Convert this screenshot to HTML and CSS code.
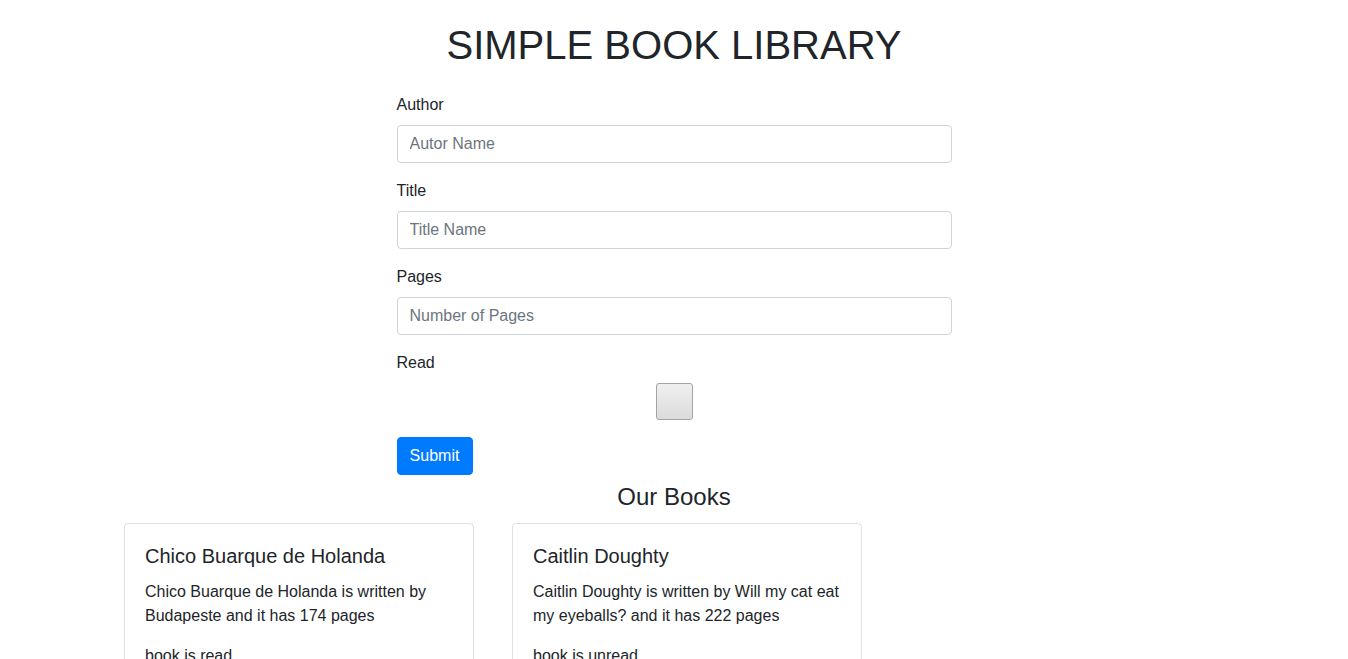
FILE: index.html
```html
<!DOCTYPE html>
<html>
<head>
<meta charset="utf-8">
<link rel="stylesheet" href="styles.css">
</head>
<body>
<h1 class="page-title">SIMPLE BOOK LIBRARY</h1>
<form class="book-form">
  <div class="form-group">
    <label class="form-label">Author</label>
    <input class="form-control" type="text" placeholder="Autor Name">
  </div>
  <div class="form-group">
    <label class="form-label">Title</label>
    <input class="form-control" type="text" placeholder="Title Name">
  </div>
  <div class="form-group">
    <label class="form-label">Pages</label>
    <input class="form-control" type="text" placeholder="Number of Pages">
  </div>
  <div class="form-group">
    <label class="form-label">Read</label>
    <div class="check-row"><input class="check" type="checkbox"></div>
  </div>
  <button class="btn-submit" type="button">Submit</button>
</form>
<h4 class="section-title">Our Books</h4>
<div class="cards">
  <div class="card">
    <h5 class="card-title">Chico Buarque de Holanda</h5>
    <p class="card-text">Chico Buarque de Holanda is written by Budapeste and it has 174 pages</p>
    <p class="card-text">book is read</p>
  </div>
  <div class="card">
    <h5 class="card-title">Caitlin Doughty</h5>
    <p class="card-text">Caitlin Doughty is written by Will my cat eat my eyeballs? and it has 222 pages</p>
    <p class="card-text">book is unread</p>
  </div>
</div>
</body>
</html>
```
FILE: styles.css
```css
* { box-sizing: border-box; }
body {
  margin: 0;
  font-family: "Liberation Sans", Arial, sans-serif;
  font-size: 16px;
  line-height: 1.5;
  color: #212529;
  background: #fff;
}
.page-title {
  margin: 21px 0 24px;
  font-size: 40px;
  font-weight: 400;
  line-height: 1.2;
  text-align: center;
}
.book-form {
  width: 555px;
  margin: 0 auto;
}
.form-group { margin-bottom: 16px; }
.form-label {
  display: block;
  margin-bottom: 8px;
}
.form-control {
  display: block;
  width: 100%;
  height: 38px;
  padding: 6px 12px;
  font-family: inherit;
  font-size: 16px;
  line-height: 1.5;
  color: #495057;
  background: #fff;
  border: 1px solid #ced4da;
  border-radius: 4px;
}
.form-control::placeholder { color: #6c757d; opacity: 1; }
.check-row {
  display: flex;
  justify-content: center;
  align-items: flex-start;
  height: 38px;
}
.check {
  appearance: none;
  -webkit-appearance: none;
  margin: 0;
  width: 37px;
  height: 37px;
  border: 1px solid #a4a4a4;
  border-radius: 3px;
  background: linear-gradient(#efefef, #dcdcdc);
}
.btn-submit {
  display: block;
  width: 76px;
  height: 38px;
  padding: 6px 12px;
  font-family: inherit;
  font-size: 16px;
  line-height: 1.5;
  color: #fff;
  background: #007bff;
  border: 1px solid #007bff;
  border-radius: 4px;
}
.section-title {
  margin: 8px 0 11px;
  font-size: 24px;
  font-weight: 400;
  line-height: 1.2;
  text-align: center;
}
.cards {
  display: flex;
  gap: 38px;
  padding-left: 124px;
}
.card {
  width: 350px;
  padding: 20px;
  border: 1px solid rgba(0,0,0,.125);
  border-radius: 4px;
}
.card-title {
  margin: 0 0 12px;
  font-size: 20px;
  font-weight: 400;
  line-height: 1.2;
}
.card-text { margin: 0 0 16px; }
```
